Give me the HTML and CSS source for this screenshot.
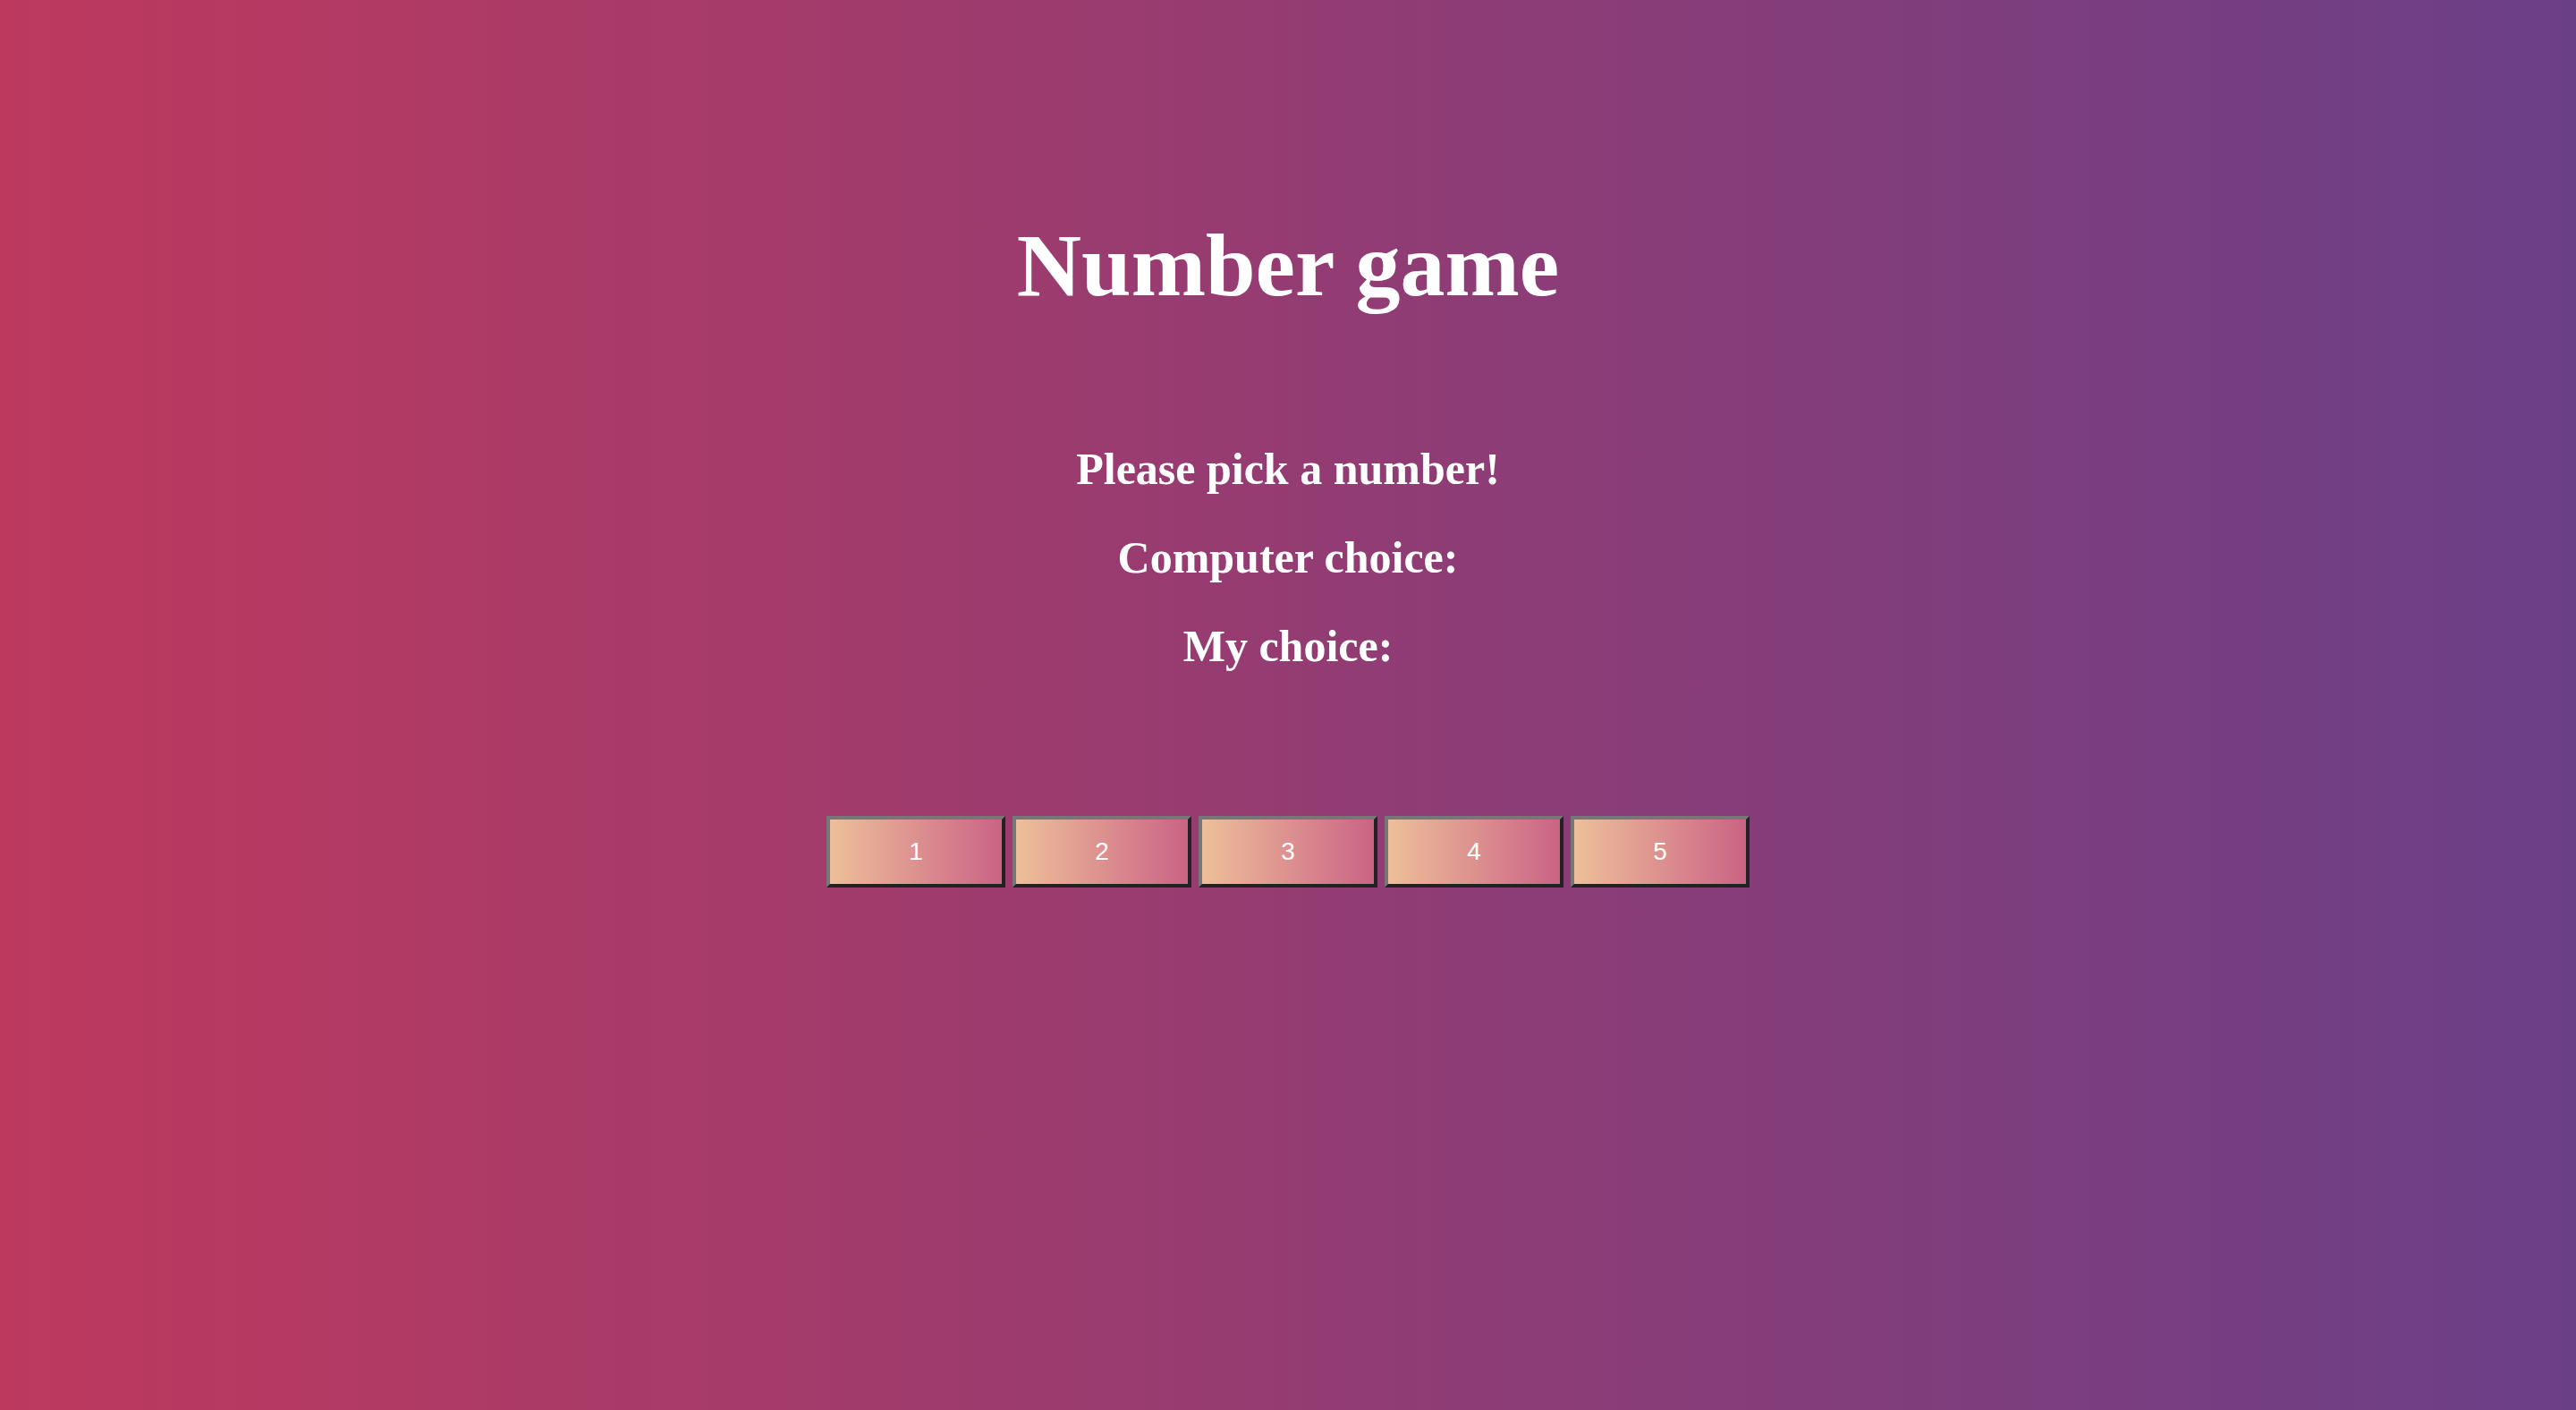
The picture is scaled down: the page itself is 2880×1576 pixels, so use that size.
FILE: index.html
```html
<!DOCTYPE html>
<html lang="en">
<head>
<meta charset="utf-8">
<title>Number game</title>
<link rel="stylesheet" href="styles.css">
</head>
<body>
<main class="game">
  <h1 class="title">Number game</h1>
  <section class="status">
    <h2 class="line">Please pick a number!</h2>
    <h2 class="line">Computer choice:</h2>
    <h2 class="line">My choice:</h2>
  </section>
  <div class="choices">
    <button class="pick">1</button>
    <button class="pick">2</button>
    <button class="pick">3</button>
    <button class="pick">4</button>
    <button class="pick">5</button>
  </div>
</main>
</body>
</html>
```
FILE: styles.css
```css
html, body {
  margin: 0;
  padding: 0;
  height: 100%;
}
body {
  background: linear-gradient(to right, #bd395e, #6b3f87);
  color: #ffffff;
  font-family: "Liberation Serif", "Times New Roman", serif;
  min-height: 1576px;
}
.game {
  display: flex;
  flex-direction: column;
  align-items: center;
  padding-top: 239px;
}
.title {
  margin: 0;
  font-size: 100px;
  line-height: 115px;
  font-weight: bold;
}
.status {
  display: flex;
  flex-direction: column;
  align-items: center;
  gap: 41px;
  margin-top: 141px;
}
.line {
  margin: 0;
  font-size: 50px;
  line-height: 58px;
  font-weight: bold;
}
.choices {
  display: flex;
  gap: 8px;
  margin-top: 161px;
}
.pick {
  box-sizing: border-box;
  width: 200px;
  height: 80px;
  margin: 0;
  padding: 0;
  border-width: 4px;
  border-style: solid;
  border-color: #777777 #222222 #222222 #777777;
  background: linear-gradient(to right, #eebf9a, #cb6385);
  color: #ffffff;
  font-family: "Liberation Sans", Arial, sans-serif;
  font-size: 28px;
  line-height: 1;
}
```
